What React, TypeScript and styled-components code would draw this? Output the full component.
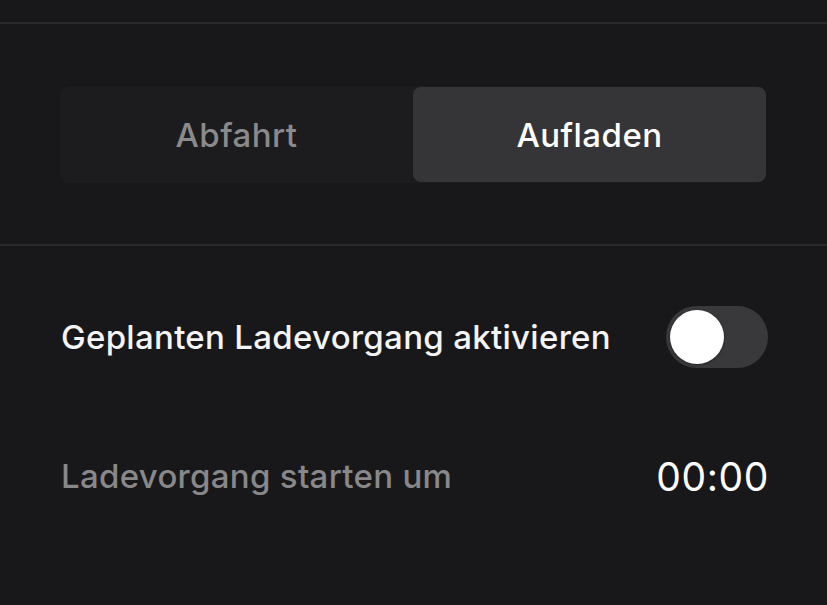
import React, { useState } from "react";
import styled, { createGlobalStyle } from "styled-components";

const GlobalStyle = createGlobalStyle`
  html, body {
    margin: 0;
    padding: 0;
    background: #18181a;
  }
  body {
    font-family: Inter, "Noto Sans", "Liberation Sans", sans-serif;
    -webkit-font-smoothing: antialiased;
  }
`;

const Screen = styled.div`
  width: 827px;
  height: 605px;
  background: #18181a;
  display: flex;
  flex-direction: column;
  overflow: hidden;
`;

const TopGap = styled.div`
  height: 22px;
`;

const Divider = styled.div`
  height: 2px;
  background: #2a2a2c;
`;

const TabSection = styled.section`
  padding: 62px 61px 61px 60px;
`;

const Segmented = styled.div`
  display: grid;
  grid-template-columns: 1fr 1fr;
  height: 97px;
  background: #1c1c1e;
  border-radius: 9px;
`;

const Segment = styled.button<{ $active: boolean }>`
  border: none;
  outline: none;
  margin: 1px 0;
  padding: 0;
  border-radius: 8px;
  background: ${(p) => (p.$active ? "#353537" : "transparent")};
  color: ${(p) => (p.$active ? "#ffffff" : "#8a8a8c")};
  font-family: inherit;
  font-size: 33px;
  font-weight: 500;
  letter-spacing: 0.45px;
  cursor: pointer;
`;

const Settings = styled.section`
  display: flex;
  flex-direction: column;
  padding: 60px 59px 0 61px;
`;

const Row = styled.div<{ $gap?: number }>`
  display: flex;
  align-items: center;
  justify-content: space-between;
  height: 62px;
  margin-top: ${(p) => p.$gap ?? 0}px;
`;

const Label = styled.span<{ $muted?: boolean }>`
  font-size: 33px;
  font-weight: 500;
  letter-spacing: 0.3px;
  color: ${(p) => (p.$muted ? "#88888a" : "#f4f4f4")};
`;

const Time = styled.span`
  font-size: 39px;
  font-weight: 400;
  color: #ffffff;
  letter-spacing: 0.6px;
  margin-right: -1px;
`;

const Track = styled.button<{ $on: boolean }>`
  position: relative;
  width: 102px;
  height: 62px;
  border: none;
  padding: 0;
  border-radius: 31px;
  background: ${(p) => (p.$on ? "#3e6ae1" : "#39393c")};
  cursor: pointer;
`;

const Knob = styled.span<{ $on: boolean }>`
  position: absolute;
  top: 4px;
  left: ${(p) => (p.$on ? "44px" : "4px")};
  width: 54px;
  height: 54px;
  border-radius: 50%;
  background: #ffffff;
  box-shadow: 0 1px 3px rgba(0, 0, 0, 0.35);
`;

export default function App() {
  const [tab, setTab] = useState<"abfahrt" | "aufladen">("aufladen");
  const [on, setOn] = useState(false);

  return (
    <>
      <GlobalStyle />
      <Screen>
        <TopGap />
        <Divider />
        <TabSection>
          <Segmented>
            <Segment $active={tab === "abfahrt"} onClick={() => setTab("abfahrt")}>
              Abfahrt
            </Segment>
            <Segment $active={tab === "aufladen"} onClick={() => setTab("aufladen")}>
              Aufladen
            </Segment>
          </Segmented>
        </TabSection>
        <Divider />
        <Settings>
          <Row>
            <Label>Geplanten Ladevorgang aktivieren</Label>
            <Track $on={on} onClick={() => setOn(!on)}>
              <Knob $on={on} />
            </Track>
          </Row>
          <Row $gap={77}>
            <Label $muted>Ladevorgang starten um</Label>
            <Time>00:00</Time>
          </Row>
        </Settings>
      </Screen>
    </>
  );
}
